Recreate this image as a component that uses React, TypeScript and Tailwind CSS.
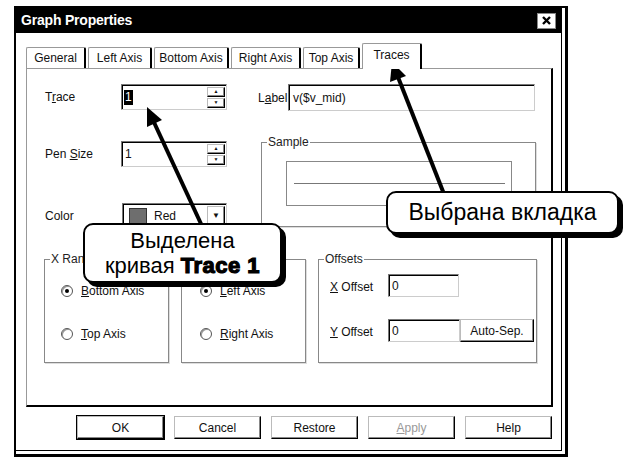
import type { ReactNode } from 'react';

// Win95-style "Graph Properties" dialog with two Russian callouts on top.

const sunken =
  'border border-t-[#777] border-l-[#777] border-r-[#ccc] border-b-[#ccc] shadow-[inset_1px_1px_0_#000]';
const raised =
  'border border-t-[#bbb] border-l-[#bbb] border-r-black border-b-black shadow-[inset_-1px_-1px_0_#888]';

function U({ children }: { children: ReactNode }) {
  return <span className="underline underline-offset-[1px]">{children}</span>;
}

function Spin({ value, selected }: { value: string; selected?: boolean }) {
  return (
    <div className={`flex h-[26px] w-[106px] items-center bg-white pl-[2px] pr-[1px] ${sunken}`}>
      <span
        className={
          selected
            ? 'bg-black px-[1px] leading-[15px] text-white'
            : 'px-[1px] leading-[15px]'
        }
      >
        {value}
      </span>
      <div className="ml-auto flex flex-col gap-[1px]">
        {['▲', '▼'].map((c) => (
          <div
            key={c}
            className={`flex h-[10px] w-[18px] items-center justify-center text-[5px] leading-none ${raised}`}
          >
            {c}
          </div>
        ))}
      </div>
    </div>
  );
}

function Group({
  legend,
  className,
  children,
}: {
  legend?: string;
  className: string;
  children?: ReactNode;
}) {
  return (
    <fieldset className={`border border-[#888] shadow-[1px_1px_0_#ddd] ${className}`}>
      <legend className="ml-[5px] px-[1px] leading-[14px] text-[#222]">
        {legend ?? <span className="inline-block h-[14px] w-[44px] align-top" />}
      </legend>
      {children}
    </fieldset>
  );
}

function Radio({ checked, children }: { checked?: boolean; children: ReactNode }) {
  return (
    <div className="flex h-[16px] items-center gap-[8px]">
      <div className="flex h-[12px] w-[12px] items-center justify-center rounded-full border border-[#555] bg-white shadow-[inset_1px_1px_0_#999]">
        {checked && <div className="h-[4px] w-[4px] rounded-full bg-black" />}
      </div>
      <span>{children}</span>
    </div>
  );
}

function Btn({ children, def, dim }: { children: ReactNode; def?: boolean; dim?: boolean }) {
  return (
    <div className={def ? 'border border-black' : 'border border-transparent'}>
      <div
        className={`flex h-[23px] w-[87px] items-center justify-center ${raised} ${
          dim ? 'text-[#999] [text-shadow:1px_1px_0_#fff]' : ''
        }`}
      >
        {children}
      </div>
    </div>
  );
}

const tabs = [
  { name: 'General', w: 'w-[60px]' },
  { name: 'Left Axis', w: 'w-[64px]' },
  { name: 'Bottom Axis', w: 'w-[75px]' },
  { name: 'Right Axis', w: 'w-[70px]' },
  { name: 'Top Axis', w: 'w-[57px]' },
];

export default function App() {
  return (
    <div className="relative h-[457px] w-[624px] overflow-hidden bg-white font-['Liberation_Sans',Arial,sans-serif] text-[12px] text-[#111]">
      {/* dialog frame */}
      <div className="ml-[14px] mt-[6px] h-[451px] w-[554px] border-l-2 border-t-2 border-r-[3px] border-b-[3px] border-black">
        <div className="h-[443px] w-[546px] border-r border-b border-black">
          {/* title bar */}
          <div className="flex h-[25px] items-center justify-between bg-black pl-[5px] pr-[5px]">
            <span className="text-[14px] font-bold tracking-[-0.2px] text-white">Graph Properties</span>
            <div className="flex h-[16px] w-[19px] items-center justify-center border border-[#888] bg-white">
              <svg width="9" height="9" viewBox="0 0 9 9">
                <path d="M1 1 L8 8 M8 1 L1 8" stroke="#000" strokeWidth="2.4" />
              </svg>
            </div>
          </div>

          {/* tabs */}
          <div className="ml-[10px] mt-[11px] flex h-[24px] items-end gap-[2px]">
            {tabs.map((t) => (
              <div
                key={t.name}
                className={`flex h-[21px] ${t.w} items-center justify-center rounded-t-[2px] border-l border-t border-[#999] border-r-2 border-r-black`}
              >
                {t.name}
              </div>
            ))}
            <div className="relative z-10 -mb-px flex h-[26px] w-[60px] items-start justify-center rounded-t-[2px] border-l border-t border-[#999] border-r-2 border-r-black bg-white pt-[2px]">
              Traces
            </div>
          </div>

          {/* panel */}
          <div className="ml-[10px] h-[339px] w-[527px] border-l border-t border-[#999] border-r-2 border-b-2 border-r-black border-b-black">
            <div className="flex gap-[30px] pl-[17px] pt-[15px]">
              {/* left column */}
              <div className="flex w-[184px] flex-col">
                <div className="flex items-center">
                  <span className="w-[77px] pl-[1px]">
                    T<U>r</U>ace
                  </span>
                  <Spin value="1" selected />
                </div>
                <div className="mt-[31px] flex items-center">
                  <span className="w-[77px] pl-[1px]">
                    Pen <U>S</U>ize
                  </span>
                  <Spin value="1" />
                </div>
                <div className="mt-[36px] flex items-center">
                  <span className="w-[78px] pl-[1px]">Color</span>
                  <div className={`flex h-[26px] w-[105px] items-center bg-white pl-[6px] pr-[1px] ${sunken}`}>
                    <div className="h-[16px] w-[18px] border border-[#333] bg-[#6e6e6e]" />
                    <span className="ml-[7px]">Red</span>
                    <div className={`ml-auto flex h-[21px] w-[18px] items-center justify-center text-[8px] ${raised}`}>
                      ▼
                    </div>
                  </div>
                </div>
              </div>

              {/* right column */}
              <div className="flex w-[278px] flex-col">
                <div className="flex items-center">
                  <span className="w-[30px] shrink-0 whitespace-nowrap">
                    L<U>a</U>bel
                  </span>
                  <div className={`flex h-[27px] w-[247px] items-center bg-white pl-[4px] ${sunken}`}>
                    v($v_mid)
                  </div>
                </div>
                <Group legend="Sample" className="ml-[3px] mt-[24px] h-[92px] w-[275px]">
                  <div className="ml-[24px] mt-[12px] flex h-[45px] w-[226px] items-center justify-center border border-[#888]">
                    <div className="h-px w-[211px] bg-[#777]" />
                  </div>
                </Group>
              </div>
            </div>

            {/* lower group boxes */}
            <div className="ml-[17px] mt-[23px] flex">
              <Group legend="X Range" className="h-[111px] w-[125px]">
                <div className="ml-[16px] mt-[17px] flex flex-col gap-[27px]">
                  <Radio checked>
                    <U>B</U>ottom Axis
                  </Radio>
                  <Radio>
                    <U>T</U>op Axis
                  </Radio>
                </div>
              </Group>
              {/* its legend sits under the callout */}
              <Group className="ml-[12px] h-[111px] w-[125px]">
                <div className="ml-[18px] mt-[17px] flex flex-col gap-[27px]">
                  <Radio checked>
                    <U>L</U>eft Axis
                  </Radio>
                  <Radio>
                    <U>R</U>ight Axis
                  </Radio>
                </div>
              </Group>
              <Group legend="Offsets" className="ml-[12px] h-[111px] w-[219px]">
                <div className="ml-[11px] mt-[8px] flex flex-col gap-[22px]">
                  <div className="flex items-center">
                    <span className="w-[58px] pt-[3px]">
                      <U>X</U> Offset
                    </span>
                    <div className={`flex h-[23px] w-[71px] items-start bg-white pl-[3px] pt-[2px] ${sunken}`}>0</div>
                  </div>
                  <div className="flex items-center">
                    <span className="w-[58px] pt-[3px]">
                      <U>Y</U> Offset
                    </span>
                    <div className={`flex h-[23px] w-[72px] items-start bg-white pl-[3px] pt-[2px] ${sunken}`}>0</div>
                    <div className={`flex h-[23px] w-[74px] items-center justify-center ${raised}`}>Auto-Sep.</div>
                  </div>
                </div>
              </Group>
            </div>
          </div>

          {/* buttons */}
          <div className="mt-[8px] flex justify-end gap-[8px] pr-[8px]">
            <Btn def>OK</Btn>
            <Btn>Cancel</Btn>
            <Btn>Restore</Btn>
            <Btn dim>
              <U>A</U>pply
            </Btn>
            <Btn>Help</Btn>
          </div>
        </div>
      </div>

      {/* arrows */}
      <svg className="absolute left-0 top-0" width="624" height="457" viewBox="0 0 624 457">
        <line x1="202" y1="226" x2="152" y2="118" stroke="#000" strokeWidth="4" />
        <polygon points="147,107 162,120 147,127" fill="#000" />
        <line x1="444" y1="194" x2="396" y2="72" stroke="#000" strokeWidth="4" />
        <polygon points="392,62 406,76 390,82" fill="#000" />
      </svg>

      {/* callouts */}
      <div className="absolute left-[83px] top-[223px] flex h-[60px] w-[199px] flex-col items-center justify-center rounded-[10px] border-2 border-black bg-white text-[22px] leading-[25px] text-black shadow-[4px_4px_0_0_#000]">
        <span>Выделена</span>
        <span>
          кривая{' '}
          <span className="font-black tracking-[0.5px] [-webkit-text-stroke:1.2px_#000]">Trace 1</span>
        </span>
      </div>
      <div className="absolute left-[386px] top-[191px] flex h-[43px] w-[233px] items-center justify-center rounded-[10px] border-2 border-black bg-white text-[23px] text-black shadow-[4px_4px_0_0_#000]">
        Выбрана вкладка
      </div>
    </div>
  );
}
